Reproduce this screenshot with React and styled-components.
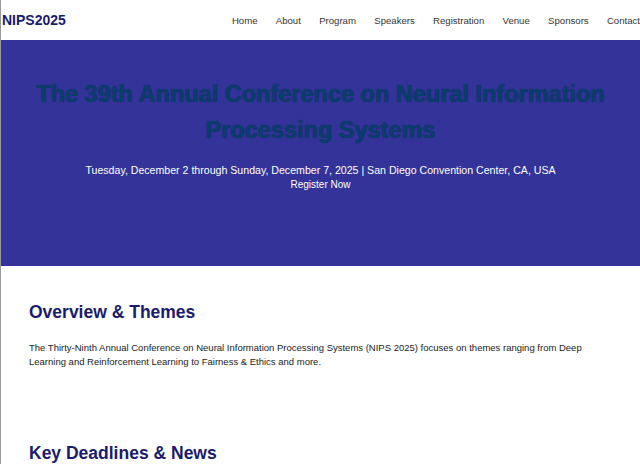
import styled, { createGlobalStyle } from "styled-components";

const navItems = ["Home", "About", "Program", "Speakers", "Registration", "Venue", "Sponsors", "Contact"];

const GlobalStyle = createGlobalStyle`
  body {
    margin: 0;
    font-family: "Liberation Sans", Arial, sans-serif;
    background: #fff;
    overflow: hidden;
  }
`;

const Page = styled.div`
  width: 640px;
  border-left: 1px solid #999;
  box-sizing: border-box;
`;

const Header = styled.header`
  height: 40px;
  display: flex;
  align-items: center;
  justify-content: space-between;
  padding-left: 1px;
  white-space: nowrap;
`;

const Logo = styled.div`
  font-size: 14px;
  font-weight: bold;
  color: #1a1a6e;
`;

const Nav = styled.nav`
  display: flex;
  gap: 18.3px;
  font-size: 9.6px;
  color: #333;
`;

const Hero = styled.section`
  height: 226px;
  background: #333399;
  text-align: center;
  padding-top: 36px;
  box-sizing: border-box;
`;

const Title = styled.h1`
  margin: 0 auto;
  width: 600px;
  font-size: 23.5px;
  line-height: 36px;
  font-weight: bold;
  color: #0b3d6c;
  text-shadow: 0 0 1px #0a2a55;
`;

const Subtitle = styled.p`
  margin: 16px 0 0;
  font-size: 10.6px;
  color: #fff;
`;

const Register = styled.a`
  display: block;
  margin-top: 3px;
  font-size: 10px;
  color: #fff;
`;

const Section = styled.section`
  padding: 0 28px;
`;

const Heading = styled.h2`
  margin: ${(p) => p.$top}px 0 0;
  font-size: 17.5px;
  color: #1a1a6e;
`;

const Text = styled.p`
  margin: 18px 0 0;
  font-size: 9.5px;
  line-height: 14px;
  color: #222;
`;

export default function App() {
  return (
    <Page>
      <GlobalStyle />
      <Header>
        <Logo>NIPS2025</Logo>
        <Nav>
          {navItems.map((item) => (
            <span key={item}>{item}</span>
          ))}
        </Nav>
      </Header>
      <Hero>
        <Title>The 39th Annual Conference on Neural Information Processing Systems</Title>
        <Subtitle>Tuesday, December 2 through Sunday, December 7, 2025 | San Diego Convention Center, CA, USA</Subtitle>
        <Register>Register Now</Register>
      </Hero>
      <Section>
        <Heading $top={36}>Overview &amp; Themes</Heading>
        <Text>
          The Thirty-Ninth Annual Conference on Neural Information Processing Systems (NIPS 2025) focuses on themes ranging from Deep
          Learning and Reinforcement Learning to Fairness &amp; Ethics and more.
        </Text>
        <Heading $top={74}>Key Deadlines &amp; News</Heading>
      </Section>
    </Page>
  );
}
